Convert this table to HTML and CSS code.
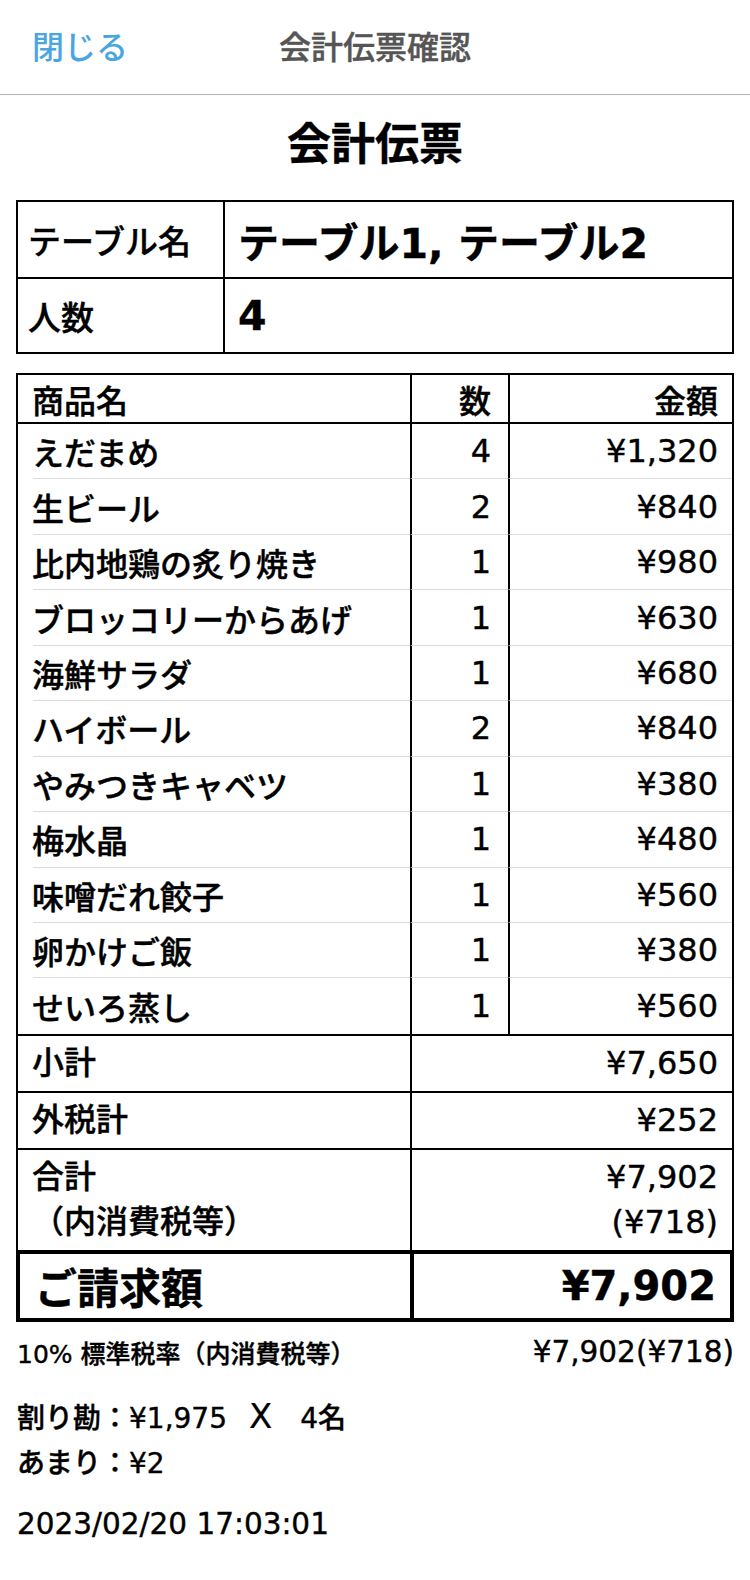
FILE: index.html
```html
<!DOCTYPE html>
<html lang="ja">
<head>
<meta charset="utf-8">
<link rel="stylesheet" href="styles.css">
</head>
<body>
<header class="nav">
  <span class="nav-close">閉じる</span>
  <span class="nav-title">会計伝票確認</span>
</header>
<main class="page">
  <h1 class="title">会計伝票</h1>

  <div class="info">
    <div class="info-row">
      <div class="info-label">テーブル名</div>
      <div class="info-value">テーブル1, テーブル2</div>
    </div>
    <div class="info-row">
      <div class="info-label">人数</div>
      <div class="info-value">4</div>
    </div>
  </div>

  <div class="slip">
    <div class="row head">
      <div class="c-name">商品名</div>
      <div class="c-qty">数</div>
      <div class="c-amt">金額</div>
    </div>
    <div class="row item"><div class="c-name">えだまめ</div><div class="c-qty">4</div><div class="c-amt">¥1,320</div></div>
    <div class="row item"><div class="c-name">生ビール</div><div class="c-qty">2</div><div class="c-amt">¥840</div></div>
    <div class="row item"><div class="c-name">比内地鶏の炙り焼き</div><div class="c-qty">1</div><div class="c-amt">¥980</div></div>
    <div class="row item"><div class="c-name">ブロッコリーからあげ</div><div class="c-qty">1</div><div class="c-amt">¥630</div></div>
    <div class="row item"><div class="c-name">海鮮サラダ</div><div class="c-qty">1</div><div class="c-amt">¥680</div></div>
    <div class="row item"><div class="c-name">ハイボール</div><div class="c-qty">2</div><div class="c-amt">¥840</div></div>
    <div class="row item"><div class="c-name">やみつきキャベツ</div><div class="c-qty">1</div><div class="c-amt">¥380</div></div>
    <div class="row item"><div class="c-name">梅水晶</div><div class="c-qty">1</div><div class="c-amt">¥480</div></div>
    <div class="row item"><div class="c-name">味噌だれ餃子</div><div class="c-qty">1</div><div class="c-amt">¥560</div></div>
    <div class="row item"><div class="c-name">卵かけご飯</div><div class="c-qty">1</div><div class="c-amt">¥380</div></div>
    <div class="row item last"><div class="c-name">せいろ蒸し</div><div class="c-qty">1</div><div class="c-amt">¥560</div></div>

    <div class="sum">
      <div class="s-label">小計</div>
      <div class="s-value">¥7,650</div>
    </div>
    <div class="sum">
      <div class="s-label">外税計</div>
      <div class="s-value">¥252</div>
    </div>
    <div class="sum tall">
      <div class="s-label"><div class="lines"><div>合計</div><div>（内消費税等）</div></div></div>
      <div class="s-value"><div class="lines"><div>¥7,902</div><div>(¥718)</div></div></div>
    </div>
    <div class="bill">
      <div class="b-label">ご請求額</div>
      <div class="b-value">¥7,902</div>
    </div>
  </div>

  <div class="tax">
    <span class="tax-label">10% 標準税率（内消費税等）</span>
    <span class="tax-value">¥7,902(¥718)</span>
  </div>
  <p class="split">割り勘：¥1,975<span class="times">X</span>4名</p>
  <p class="rest">あまり：¥2</p>
  <p class="date">2023/02/20 17:03:01</p>
</main>
</body>
</html>
```

FILE: styles.css
```css
* { box-sizing: border-box; }
html, body { margin: 0; padding: 0; background: #fff; }
body {
  width: 750px;
  font-family: "DejaVu Sans", "Noto Sans CJK JP", sans-serif;
  color: #000;
  font-weight: 500;
  -webkit-text-stroke: 0.4px currentColor;
}

.nav {
  position: relative;
  height: 95px;
  border-bottom: 1px solid #b4b4b4;
  display: flex;
  align-items: center;
  justify-content: center;
}
.nav-close {
  position: absolute;
  left: 32px;
  top: 29px;
  line-height: 38px;
  font-size: 32px;
  color: #4aa6df;
  -webkit-text-stroke: 0;
}
.nav-title {
  font-size: 32px;
  line-height: 38px;
  color: #555;
  margin-top: 2px;
}

.page { padding: 0 16px; }

.title {
  margin: 0;
  padding-top: 20px;
  height: 105px;
  line-height: 60px;
  font-size: 44px;
  font-weight: 700;
  text-align: center;
}

.info { border: 2px solid #000; }
.info-row {
  display: grid;
  grid-template-columns: 205px 1fr;
  height: 75px;
}
.info-row + .info-row { border-top: 2px solid #000; }
.info-label {
  display: flex;
  align-items: center;
  padding-left: 10px;
  font-size: 33px;
}
.info-value {
  display: flex;
  align-items: center;
  padding-left: 13px;
  border-left: 2px solid #000;
  font-size: 41px;
  font-weight: 700;
}

.slip {
  margin-top: 19px;
  border: 2px solid #000;
}
.row {
  display: grid;
  grid-template-columns: 392px 98px 1fr;
}
.row > div { display: flex; align-items: center; font-size: 32px; }
.row .c-qty, .row .c-amt { justify-content: flex-end; border-left: 2px solid #000; }
.row .c-qty { padding-right: 17px; }
.row .c-amt { padding-right: 14px; }
.head { height: 49px; border-bottom: 2px solid #000; }
.head .c-name { padding-left: 14px; }
.item { height: 55.45px; }
.item .c-name { margin-left: 15px; text-indent: -1px; }
.item > div { border-bottom: 1px solid #dcdcdc; }
.item.last > div { border-bottom: none; }

.sum {
  display: grid;
  grid-template-columns: 392px 1fr;
  border-top: 2px solid #000;
  height: 57px;
}
.sum.tall { height: 102px; }
.sum > div { font-size: 32px; display: flex; align-items: center; line-height: 45px; }
.s-label { padding-left: 14px; }
.s-value { border-left: 2px solid #000; justify-content: flex-end; padding-right: 14px; text-align: right; }

.bill {
  display: grid;
  grid-template-columns: 390px 1fr;
  border: 2px solid #000;
  border-top-width: 4px;
  height: 70px;
}
.bill > div { display: flex; align-items: center; font-weight: 700; }
.b-label { padding-left: 15px; font-size: 42px; }
.b-value { border-left: 4px solid #000; justify-content: flex-end; padding-right: 14px; font-size: 40px; }

.tax {
  display: flex;
  justify-content: space-between;
  align-items: center;
  margin-top: 11px;
  height: 38px;
}
.tax-label { font-size: 25px; padding-left: 1px; }
.tax-value { font-size: 29.5px; }

.split, .rest, .date { margin: 0; padding-left: 1px; }
.split { margin-top: 25px; font-size: 28px; line-height: 40px; }
.times { margin: 0 28px 0 22px; font-size: 34px; -webkit-text-stroke: 0.2px currentColor; }
.rest { margin-top: 5px; font-size: 28px; line-height: 40px; }
.date { margin-top: 20px; font-size: 29.5px; line-height: 40px; }
```
